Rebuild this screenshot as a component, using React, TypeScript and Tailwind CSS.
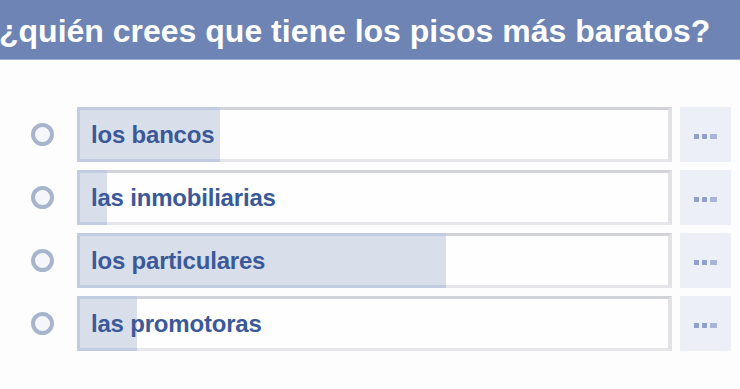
import React from "react";

interface PollOption {
  label: string;
  fill: number;
}

const options: PollOption[] = [
  { label: "los bancos", fill: 143 },
  { label: "las inmobiliarias", fill: 30 },
  { label: "los particulares", fill: 369 },
  { label: "las promotoras", fill: 60 },
];

const Radio = () => (
  <div className="flex h-[55px] w-[48px] items-center justify-center">
    <div className="h-[23px] w-[23px] rounded-full border-[4px] border-[#a7b5cc] bg-[#f4f6fa]" />
  </div>
);

const MoreButton = () => (
  <div className="flex h-[55px] w-[51px] items-center justify-center bg-[#eceff5]">
    <div className="mt-[3px] flex gap-[3px]">
      <span className="h-[5px] w-[5px] bg-[#8fa1ca]" />
      <span className="h-[5px] w-[5px] bg-[#8fa1ca]" />
      <span className="h-[5px] w-[7px] bg-[#a7b5d6]" />
    </div>
  </div>
);

const OptionRow = ({ option }: { option: PollOption }) => (
  <div className="flex items-center">
    <Radio />
    <div className="relative ml-[11px] flex h-[55px] w-[595px] items-center border-t-[3px] border-r-[4px] border-b-[3px] border-l-[3px] border-t-[#d2d2d9] border-r-[#e1e1e6] border-b-[#e6e6ea] border-l-[#dcdce2] bg-[#fdfefd]">
      <div
        className="absolute -top-[3px] -bottom-[3px] -left-[3px] border-t-[3px] border-b-[3px] border-l-[3px] border-[#c2cce0] bg-[#d8dfea]"
        style={{ width: option.fill }}
      />
      <span className="relative pl-[11px] text-[24px] font-bold tracking-[-0.2px] text-[#3b5998]">
        {option.label}
      </span>
    </div>
    <div className="ml-[8px]">
      <MoreButton />
    </div>
  </div>
);

export default function App() {
  return (
    <div
      className="h-[389px] w-[740px] overflow-hidden bg-[#fcfdfc]"
      style={{ fontFamily: '"Liberation Sans", Arial, sans-serif' }}
    >
      <div className="flex h-[60px] items-center border-b border-[#9dadce] bg-[#6d84b4]">
        <h1 className="-ml-[1px] mt-[2px] whitespace-nowrap text-[32px] font-bold leading-none text-white">
          ¿quién crees que tiene los pisos más baratos?
        </h1>
      </div>
      <div className="flex flex-col gap-[8px] pt-[47px] pl-[18px]">
        {options.map((o) => (
          <OptionRow key={o.label} option={o} />
        ))}
      </div>
    </div>
  );
}
